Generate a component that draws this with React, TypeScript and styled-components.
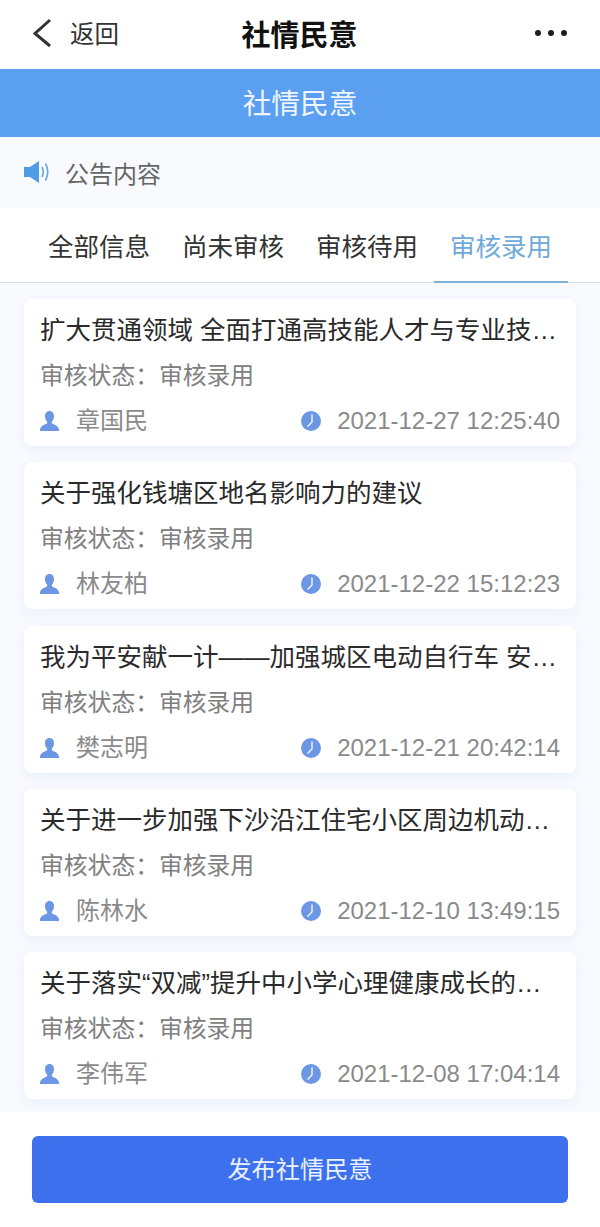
import React from "react";
import styled, { createGlobalStyle } from "styled-components";

const GlobalStyle = createGlobalStyle`
  * {
    box-sizing: border-box;
  }

  body {
    margin: 0;
    background-color: #fff;
    font-family: "Liberation Sans", "Noto Sans CJK SC", sans-serif;
  }
`;

const Page = styled.div`
  width: 600px;
  height: 1227px;
  display: flex;
  flex-direction: column;
  overflow: hidden;
  background-color: #f8fafe;
`;

const NavBar = styled.header`
  height: 69px;
  flex: none;
  display: grid;
  grid-template-columns: 1fr auto 1fr;
  align-items: center;
  padding: 0 33px 4px 32px;
  background-color: #fff;
`;

const BackLink = styled.div`
  display: flex;
  align-items: center;
  gap: 18px;
  font-size: 24.5px;
  color: #333;
`;

const NavTitle = styled.h1`
  margin: 0;
  font-size: 29px;
  font-weight: 700;
  color: #111;
`;

const MoreDots = styled.div`
  justify-self: end;
  display: flex;
  gap: 7px;

  span {
    width: 6px;
    height: 6px;
    border-radius: 50%;
    background-color: #1c1c1c;
  }
`;

const Banner = styled.div`
  height: 68px;
  flex: none;
  display: flex;
  align-items: center;
  justify-content: center;
  padding-bottom: 3px;
  font-size: 28.7px;
  color: #eef5fe;
  background-color: #5b9ff0;
`;

const Notice = styled.div`
  height: 71px;
  flex: none;
  display: flex;
  align-items: center;
  gap: 15px;
  padding: 0 0 1px 24px;
  font-size: 24px;
  color: #666;
  background-color: #f8fafe;
`;

const Tabs = styled.nav`
  height: 75px;
  flex: none;
  display: grid;
  grid-template-columns: repeat(4, 1fr);
  padding: 0 32px;
  background-color: #fff;
  border-bottom: 1px solid #dcdfe4;
`;

const Tab = styled.div<{ $active?: boolean }>`
  display: flex;
  align-items: center;
  justify-content: center;
  margin-bottom: -1px;
  padding-bottom: 1px;
  font-size: 25.5px;
  color: ${({ $active }) => ($active ? "#6ea9d8" : "#333")};
  border-bottom: 2px solid ${({ $active }) => ($active ? "#7fb0d8" : "transparent")};
`;

const List = styled.main`
  flex: 1;
  min-height: 0;
  display: flex;
  flex-direction: column;
  gap: 16.25px;
  padding: 16px 24px 0;
  overflow: hidden;
`;

const Card = styled.article`
  height: 147px;
  flex: none;
  display: flex;
  flex-direction: column;
  padding: 13px 16px 0;
  background-color: #fff;
  border-radius: 8px;
  box-shadow: 0 4px 12px rgba(120, 150, 220, 0.1);
`;

const CardTitle = styled.h2`
  margin: 0;
  height: 36px;
  font-size: 25.5px;
  font-weight: 400;
  line-height: 36px;
  color: #2a2a2a;
  white-space: nowrap;
  overflow: hidden;
  text-overflow: ellipsis;
`;

const Status = styled.div`
  margin-top: 10px;
  height: 36px;
  font-size: 23.8px;
  line-height: 36px;
  color: #808080;
`;

const Meta = styled.div`
  margin-top: 9px;
  display: flex;
  align-items: center;
  justify-content: space-between;
  font-size: 24px;
  line-height: 36px;
  color: #8a8a8a;
`;

const MetaItem = styled.div`
  display: flex;
  align-items: center;
`;

const Author = styled(MetaItem)`
  gap: 17px;
`;

const Time = styled(MetaItem)`
  gap: 16px;
`;

const Footer = styled.footer`
  height: 115px;
  flex: none;
  padding: 24px 32px 0;
  background-color: #fff;
`;

const PublishButton = styled.button`
  display: block;
  width: 100%;
  height: 67px;
  padding: 0 0 4px;
  border: none;
  border-radius: 6px;
  font-family: inherit;
  font-size: 24.2px;
  color: #eaf2ff;
  background-color: #3d70ec;
`;

const BackIcon = () => (
  <svg width="20" height="30" viewBox="0 0 20 30" fill="none">
    <path d="M18 2 L3 15.5 L18 28" stroke="#333" strokeWidth="3" />
  </svg>
);

const SpeakerIcon = () => (
  <svg width="26" height="22" viewBox="0 0 26 22" fill="none">
    <path d="M0 6 H6 L15 0 V22 L6 16 H0 Z" fill="#4f9be8" />
    <path d="M18 6 Q20.5 11 18 16" stroke="#6aa9e8" strokeWidth="1.7" />
    <path d="M21.5 2.5 Q26 11 21.5 19.5" stroke="#6aa9e8" strokeWidth="1.7" />
  </svg>
);

const UserIcon = () => (
  <svg width="19" height="20" viewBox="0 0 19 20">
    <path
      d="M9.5 0 C12.6 0 14 2.4 14 5.2 C14 7.6 13 9.7 11.8 10.7 V12.2 C13.8 13.4 18.2 14.3 19 18.5 V20 H0 V18.5 C0.8 14.3 5.2 13.4 7.2 12.2 V10.7 C6 9.7 5 7.6 5 5.2 C5 2.4 6.4 0 9.5 0 Z"
      fill="#6c97e4"
    />
  </svg>
);

const ClockIcon = () => (
  <svg width="20" height="20" viewBox="0 0 20 20" fill="none">
    <circle cx="10" cy="10" r="10" fill="#6c97e4" />
    <path d="M11 3.5 V11 L6.5 15.5" stroke="#fff" strokeWidth="1.3" />
  </svg>
);

const tabs = ["全部信息", "尚未审核", "审核待用", "审核录用"];

const records = [
  {
    title: "扩大贯通领域 全面打通高技能人才与专业技术人才发展通道",
    author: "章国民",
    time: "2021-12-27 12:25:40",
  },
  {
    title: "关于强化钱塘区地名影响力的建议",
    author: "林友柏",
    time: "2021-12-22 15:12:23",
  },
  {
    title: "我为平安献一计——加强城区电动自行车 安全管理的建议",
    author: "樊志明",
    time: "2021-12-21 20:42:14",
  },
  {
    title: "关于进一步加强下沙沿江住宅小区周边机动车停放管理的建议",
    author: "陈林水",
    time: "2021-12-10 13:49:15",
  },
  {
    title: "关于落实“双减”提升中小学心理健康成长的建议和意见",
    author: "李伟军",
    time: "2021-12-08 17:04:14",
  },
];

export default function App() {
  return (
    <>
      <GlobalStyle />
      <Page>
        <NavBar>
          <BackLink>
            <BackIcon />
            返回
          </BackLink>
          <NavTitle>社情民意</NavTitle>
          <MoreDots>
            <span />
            <span />
            <span />
          </MoreDots>
        </NavBar>
        <Banner>社情民意</Banner>
        <Notice>
          <SpeakerIcon />
          公告内容
        </Notice>
        <Tabs>
          {tabs.map((tab) => (
            <Tab key={tab} $active={tab === "审核录用"}>
              {tab}
            </Tab>
          ))}
        </Tabs>
        <List>
          {records.map((record) => (
            <Card key={record.time}>
              <CardTitle>{record.title}</CardTitle>
              <Status>审核状态：审核录用</Status>
              <Meta>
                <Author>
                  <UserIcon />
                  {record.author}
                </Author>
                <Time>
                  <ClockIcon />
                  {record.time}
                </Time>
              </Meta>
            </Card>
          ))}
        </List>
        <Footer>
          <PublishButton>发布社情民意</PublishButton>
        </Footer>
      </Page>
    </>
  );
}
